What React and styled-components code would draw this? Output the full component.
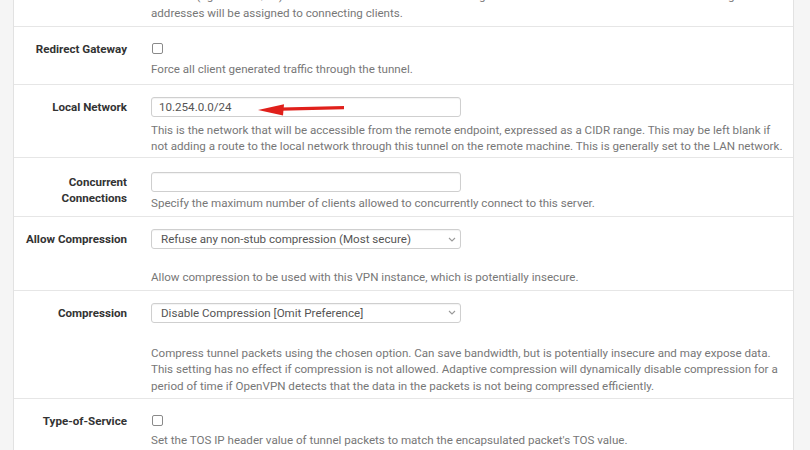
import styled, { createGlobalStyle } from "styled-components";

const Global = createGlobalStyle`
  html, body {
    margin: 0;
    padding: 0;
    background: #f5f5f5;
    overflow: hidden;
  }
  body {
    font-family: Roboto, "Liberation Sans", Arial, sans-serif;
    font-size: 11.6px;
    color: #333;
  }
`;

const Page = styled.div`
  width: 810px;
  height: 450px;
  padding-left: 13px;
  box-sizing: border-box;
  overflow: hidden;
`;

const Panel = styled.div`
  width: 781px;
  margin-top: -12px;
  background: #fff;
  border-left: 1px solid #e2e2e2;
  border-right: 1px solid #e2e2e2;
  box-sizing: border-box;
`;

const Row = styled.div`
  display: grid;
  grid-template-columns: 113px 1fr;
  column-gap: 24px;
  padding: ${(p) => p.$top ?? 12}px 0 ${(p) => p.$bottom ?? 5}px;
  border-bottom: 1px solid #e6e6e6;
`;

const Label = styled.div`
  text-align: right;
  font-weight: 700;
  line-height: 16px;
  padding-top: 2px;
  color: #333;
`;

const Field = styled.div`
  position: relative;
  display: flex;
  flex-direction: column;
  align-items: flex-start;
`;

const Help = styled.div`
  margin-top: ${(p) => p.$gap ?? 5}px;
  color: #777;
  line-height: 16.5px;
  white-space: nowrap;
`;

const TextBox = styled.div`
  width: 310px;
  height: 20px;
  box-sizing: border-box;
  border: 1px solid #cfcfcf;
  border-radius: 3px;
  box-shadow: inset 0 1px 1px rgba(0, 0, 0, 0.05);
  padding: 0 7px;
  display: flex;
  align-items: center;
  color: #555;
`;

const SelectBox = styled(TextBox)`
  justify-content: space-between;
  padding: 0 4px 0 9px;
`;

const Check = styled.span`
  display: block;
  box-sizing: border-box;
  width: 11px;
  height: 11px;
  margin: 4px 0 5px 1px;
  border: 1px solid #8a8a8a;
  border-radius: 2px;
  background: #fff;
`;

const Arrow = styled.svg`
  position: absolute;
  left: 107px;
  top: 0;
`;

const Chevron = () => (
  <svg width="8" height="5" viewBox="0 0 8 5">
    <path d="M1 1l3 3 3-3" fill="none" stroke="#999" strokeWidth="1.1" />
  </svg>
);

export default function App() {
  return (
    <Page>
      <Global />
      <Panel>
        <Row $top={0}>
          <Label />
          <Field>
            <Help $gap={0}>
              notation (eg. 10.0.8.0/24). The first network address will be assigned to the server virtual interface. The remaining network
              <br />
              addresses will be assigned to connecting clients.
            </Help>
          </Field>
        </Row>

        <Row $bottom={6}>
          <Label>Redirect Gateway</Label>
          <Field>
            <Check />
            <Help $gap={2}>Force all client generated traffic through the tunnel.</Help>
          </Field>
        </Row>

        <Row $bottom={2}>
          <Label>Local Network</Label>
          <Field>
            <TextBox>10.254.0.0/24</TextBox>
            <Arrow width="90" height="20" viewBox="0 0 90 20">
              <path d="M23 10.6 L86 9 L86 12.3 L23 13.8 Z" fill="#e0201b" />
              <path d="M0 13 L26 7.2 L25 18.4 Z" fill="#e0201b" />
            </Arrow>
            <Help>
              This is the network that will be accessible from the remote endpoint, expressed as a CIDR range. This may be left blank if
              <br />
              not adding a route to the local network through this tunnel on the remote machine. This is generally set to the LAN network.
            </Help>
          </Field>
        </Row>

        <Row $top={14}>
          <Label>
            Concurrent
            <br />
            Connections
          </Label>
          <Field>
            <TextBox />
            <Help $gap={3}>Specify the maximum number of clients allowed to concurrently connect to this server.</Help>
          </Field>
        </Row>

        <Row $bottom={4}>
          <Label>Allow Compression</Label>
          <Field>
            <SelectBox>
              Refuse any non-stub compression (Most secure)
              <Chevron />
            </SelectBox>
            <Help $gap={20}>Allow compression to be used with this VPN instance, which is potentially insecure.</Help>
          </Field>
        </Row>

        <Row $bottom={4}>
          <Label>Compression</Label>
          <Field>
            <SelectBox>
              Disable Compression [Omit Preference]
              <Chevron />
            </SelectBox>
            <Help $gap={22}>
              Compress tunnel packets using the chosen option. Can save bandwidth, but is potentially insecure and may expose data.
              <br />
              This setting has no effect if compression is not allowed. Adaptive compression will dynamically disable compression for a
              <br />
              period of time if OpenVPN detects that the data in the packets is not being compressed efficiently.
            </Help>
          </Field>
        </Row>

        <Row>
          <Label>Type-of-Service</Label>
          <Field>
            <Check />
            <Help $gap={1}>Set the TOS IP header value of tunnel packets to match the encapsulated packet's TOS value.</Help>
          </Field>
        </Row>
      </Panel>
    </Page>
  );
}
